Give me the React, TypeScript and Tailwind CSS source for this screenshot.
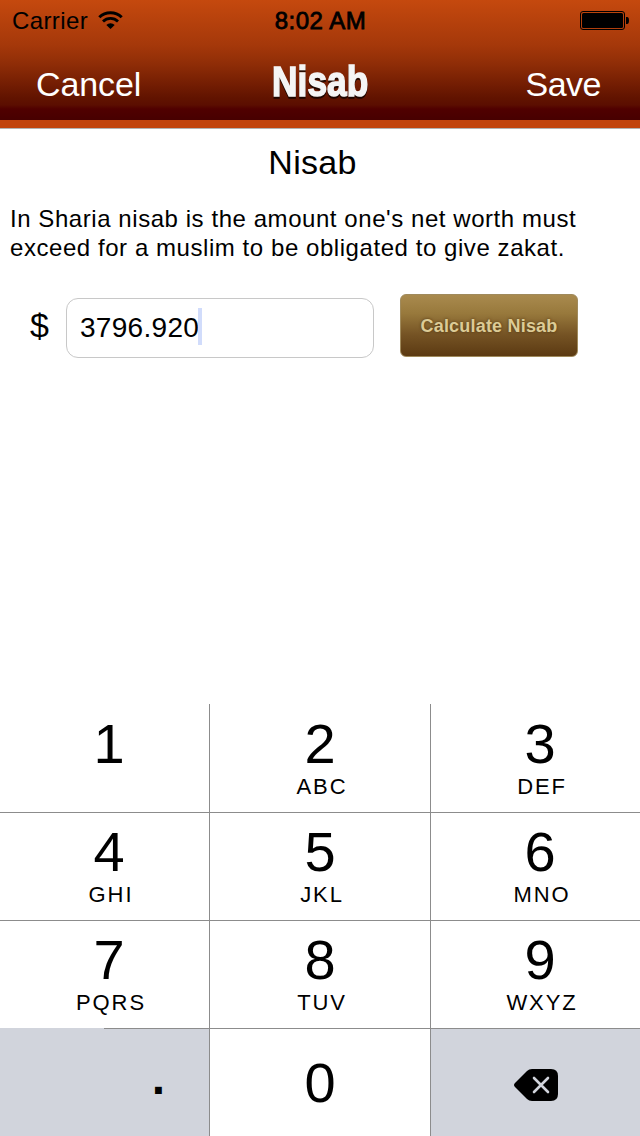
const keys = [
  { digit: "1", letters: "" },
  { digit: "2", letters: "ABC" },
  { digit: "3", letters: "DEF" },
  { digit: "4", letters: "GHI" },
  { digit: "5", letters: "JKL" },
  { digit: "6", letters: "MNO" },
  { digit: "7", letters: "PQRS" },
  { digit: "8", letters: "TUV" },
  { digit: "9", letters: "WXYZ" },
];

function WifiIcon() {
  return (
    <svg width="25" height="18" viewBox="0 0 25 18" fill="none" stroke="black">
      <path d="M1.3 6.3a16 16 0 0 1 22.4 0" strokeWidth="3" />
      <path d="M5 10.4a10.7 10.7 0 0 1 15 0" strokeWidth="2.8" />
      <path d="M8.3 14a6 6 0 0 1 8.4 0L12.5 18z" fill="black" stroke="none" />
    </svg>
  );
}

function BatteryIcon() {
  return (
    <svg width="49" height="19" viewBox="0 0 49 19">
      <rect x="0.5" y="0.5" width="44" height="18" rx="2.5" fill="none" stroke="black" />
      <rect x="2" y="2" width="41" height="15" rx="1.5" fill="black" />
      <path d="M46 6h1.2c1 0 1.8 1 1.8 3.5S48.2 13 47.2 13H46z" fill="black" />
    </svg>
  );
}

function DeleteIcon() {
  return (
    <svg width="44" height="32" viewBox="0 0 44 32">
      <path
        d="M18 0H37q7 0 7 7V25q0 7-7 7H18q-3 0-5-2L1 18q-2-2 0-4L13 2q2-2 5-2z"
        fill="black"
      />
      <path d="M20 9l14 14M34 9L20 23" stroke="#d1d4dc" strokeWidth="2.6" strokeLinecap="round" />
    </svg>
  );
}

function Header() {
  return (
    <header className="h-[129px] border-b border-[#b2b2b2] bg-[#c1440d]">
      <div className="h-[120px] bg-[linear-gradient(to_bottom,#c5490e_0px,#a5380a_45px,#8f2d07_64px,#611300_98px,#5b0e00_105px,#500000_109px,#470000_120px)]">
        {/* Status bar */}
        <div className="grid h-10 grid-cols-3 items-center pr-[11px] pl-3 text-2xl leading-10 text-black">
          <div className="flex items-center gap-2.5">
            <span className="translate-y-px tracking-[0.4px]">Carrier</span>
            <WifiIcon />
          </div>
          <span className="translate-y-px text-center tracking-[0.5px] [-webkit-text-stroke:0.8px_black]">8:02 AM</span>
          <div className="flex justify-end">
            <BatteryIcon />
          </div>
        </div>

        {/* Navigation */}
        <div className="grid h-20 grid-cols-3 items-center pr-[39px] pl-9 text-[34px] text-white">
          <button className="pt-[9px] text-left tracking-[-0.1px]">Cancel</button>
          <h1 className="flex origin-center translate-x-[2px] scale-x-[0.84] justify-center pt-[3px] text-[42px] leading-none font-bold text-[#f5f5f5] drop-shadow-[0_2px_0_rgba(0,0,0,0.7)] [-webkit-text-stroke:1.6px_#f5f5f5]">
            Nisab
          </h1>
          <button className="pt-[9px] text-right tracking-[-0.5px]">Save</button>
        </div>
      </div>
    </header>
  );
}

function Keypad() {
  return (
    <div className="grid h-[432px] grid-cols-[210px_221px_209px] grid-rows-[109px_108px_108px_107px]">
      {keys.map((key) => (
        <button
          key={key.digit}
          className="flex flex-col items-center border-r border-b border-[#8c8c8c] bg-white pt-2 nth-[-n+3]:pt-[9px] nth-[3n]:border-r-0 nth-[3n+1]:pl-[9px] nth-[3n+3]:pl-[9px]"
        >
          <span className="h-[61px] text-[56px] leading-[62px]">{key.digit}</span>
          <span className="pl-1 text-[22px] leading-[26px] tracking-[1.9px]">{key.letters}</span>
        </button>
      ))}
      <button className="relative border-r border-[#8c8c8c] bg-[#d1d4dc] pr-[44px] pb-[9px] text-right text-5xl font-bold">
        {/* the divider above this key only starts halfway across */}
        <span className="absolute -top-px left-0 h-px w-[104px] bg-[#d1d4dc]" />
        .
      </button>
      <button className="border-r border-[#8c8c8c] bg-white text-[56px] leading-[107px]">0</button>
      <button className="flex items-center justify-center bg-[#d1d4dc] pt-1">
        <DeleteIcon />
      </button>
    </div>
  );
}

export default function App() {
  return (
    <div className="flex h-[1136px] w-[640px] flex-col overflow-hidden bg-white font-['Liberation_Sans',Arial,sans-serif] text-black">
      <Header />

      <main className="flex-1">
        <h2 className="pt-[13px] pr-[15px] text-center text-[34px] leading-10 tracking-[0.3px]">Nisab</h2>
        <p className="mt-[22px] pl-[10px] text-2xl leading-[29px] tracking-[0.56px] whitespace-nowrap">
          In Sharia nisab is the amount one's net worth must
          <br />
          exceed for a muslim to be obligated to give zakat.
        </p>

        <div className="mt-[32px] flex items-start pl-[30px]">
          <span className="w-9 pt-[11px] text-[34px] leading-10">$</span>
          <div className="mt-1 flex h-[60px] w-[308px] items-center rounded-xl border border-[#c8c8c8] pl-[13px] text-[28px] tracking-[0.3px]">
            <span>3796.920</span>
            <span className="-mt-[3px] -ml-px h-[37px] w-1 bg-[#d1dcfb]" />
          </div>
          <button className="ml-[26px] h-[63px] w-[178px] rounded-md border border-[#a08a5c] bg-[linear-gradient(to_bottom,#a98a4e,#98793c_30%,#755324_65%,#5c3a12)] pt-px text-lg font-bold tracking-[0.2px] text-[#dccb96] [text-shadow:0_0_3px_#4d3310]">
            Calculate Nisab
          </button>
        </div>
      </main>

      <Keypad />
    </div>
  );
}
